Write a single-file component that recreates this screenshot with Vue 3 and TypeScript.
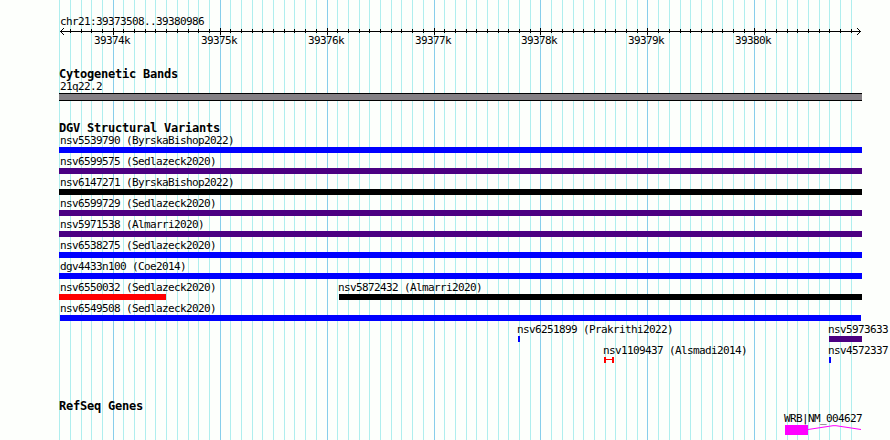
<script setup lang="ts">
interface Feature {
  label: string
  x: number
  end: number
  color: string
  labelX: number
  span?: boolean
}

const START = 39373508
const END = 39380986
const LEFT = 60
const SCALE = 800 / (END - START + 1)

const toX = (pos: number): number => Math.round(LEFT + (pos - START) * SCALE)

const lines: { x: number; major: boolean }[] = []
for (let pos = 39373500; pos <= END; pos += 100) {
  lines.push({ x: toX(pos), major: pos % 1000 === 0 })
}
const ticks = lines.slice(1)

const majors: { x: number; text: string }[] = []
for (let pos = 39374000; pos <= END; pos += 1000) {
  majors.push({ x: toX(pos) - 19, text: `${pos / 1000}k` })
}

const BLUE = '#0000ff'
const INDIGO = '#4b0082'
const BLACK = '#000000'
const RED = '#ff0000'

const full = (label: string, color: string): Feature[] => [
  { label, x: 59, end: 862, color, labelX: 60 },
]

const rows: Feature[][] = [
  full('nsv5539790 (ByrskaBishop2022)', BLUE),
  full('nsv6599575 (Sedlazeck2020)', INDIGO),
  full('nsv6147271 (ByrskaBishop2022)', BLACK),
  full('nsv6599729 (Sedlazeck2020)', INDIGO),
  full('nsv5971538 (Almarri2020)', INDIGO),
  full('nsv6538275 (Sedlazeck2020)', BLUE),
  full('dgv4433n100 (Coe2014)', BLUE),
  [
    { label: 'nsv6550032 (Sedlazeck2020)', x: 59, end: 166, color: RED, labelX: 60 },
    { label: 'nsv5872432 (Almarri2020)', x: 339, end: 862, color: BLACK, labelX: 338 },
  ],
  [{ label: 'nsv6549508 (Sedlazeck2020)', x: 60, end: 861, color: BLUE, labelX: 60 }],
  [
    { label: 'nsv6251899 (Prakrithi2022)', x: 518, end: 520, color: BLUE, labelX: 517 },
    { label: 'nsv5973633', x: 829, end: 862, color: INDIGO, labelX: 828 },
  ],
  [
    { label: 'nsv1109437 (Alsmadi2014)', x: 604, end: 614, color: RED, labelX: 603, span: true },
    { label: 'nsv4572337', x: 829, end: 831, color: BLUE, labelX: 828 },
  ],
]
</script>

<template>
  <main class="browser">
    <svg class="gridlines" width="890" height="440" shape-rendering="crispEdges">
      <rect
        v-for="line in lines"
        :key="line.x"
        :x="line.x"
        y="0"
        width="1"
        height="440"
        :class="line.major ? 'major' : 'minor'"
      />
    </svg>

    <header class="ruler">
      <div class="text region">chr21:39373508..39380986</div>
      <svg class="axis" width="890" height="7" shape-rendering="crispEdges">
        <rect x="60" y="3" width="801" height="1" />
        <rect
          v-for="tick in ticks"
          :key="tick.x"
          :x="tick.x"
          :y="tick.major ? 0 : 1"
          width="1"
          :height="tick.major ? 7 : 4"
        />
        <path d="M61 2h1v-1h1v-1h1v1h-1v1h-1v1h-1zM61 4h1v1h1v1h1v1h-1v-1h-1v-1h-1z" />
        <path d="M860 2h-1v-1h-1v-1h-1v1h1v1h1v1h1zM860 4h-1v1h-1v1h-1v1h1v-1h1v-1h1z" />
      </svg>
      <div class="lane">
        <span v-for="m in majors" :key="m.x" class="text placed" :style="{ left: m.x + 'px' }">{{ m.text }}</span>
      </div>
    </header>

    <section class="cytobands">
      <h2 class="title">Cytogenetic Bands</h2>
      <div class="text region">21q22.2</div>
      <div class="band"></div>
    </section>

    <section class="variants">
      <h2 class="title">DGV Structural Variants</h2>
      <div v-for="(row, i) in rows" :key="i" class="row">
        <template v-for="f in row" :key="f.label">
          <span class="text placed" :style="{ left: f.labelX + 'px' }">{{ f.label }}</span>
          <span
            class="bar"
            :class="{ span: f.span }"
            :style="{ left: f.x + 'px', width: f.end - f.x + 'px', color: f.color }"
          ></span>
        </template>
      </div>
    </section>

    <section class="genes">
      <h2 class="title">RefSeq Genes</h2>
      <div class="text gene-label">WRB|NM_004627</div>
      <svg class="gene" width="890" height="12">
        <rect x="785" y="0" width="23" height="10" />
        <path d="M808 4.5L833 0.7H836L861 4.5" />
      </svg>
    </section>
  </main>
</template>

<style>
body {
  margin: 0;
  background: #fdfffc;
}
</style>

<style scoped>
.browser {
  position: relative;
  width: 890px;
  height: 440px;
  overflow: hidden;
  background: #fdfffc;
  color: #000;
}

svg {
  display: block;
}

.gridlines {
  position: absolute;
  inset: 0;
}

.minor {
  fill: #afeeee;
}

.major {
  fill: #87ceeb;
}

.ruler,
.cytobands,
.variants,
.genes {
  position: relative;
}

.ruler {
  padding-top: 16px;
}

.text {
  display: block;
  height: 12px;
  font-family: 'DejaVu Sans Mono', 'Liberation Mono', monospace;
  font-size: 11px;
  line-height: 12px;
  letter-spacing: -0.623px;
  white-space: pre;
}

.region {
  padding-left: 60px;
}

.lane {
  position: relative;
  height: 12px;
}

.placed {
  position: absolute;
  top: 0;
}

.title {
  height: 14px;
  margin: 0;
  padding-left: 59px;
  font-family: 'DejaVu Sans Mono', 'Liberation Mono', monospace;
  font-size: 12px;
  font-weight: 700;
  line-height: 14px;
  letter-spacing: -0.225px;
  white-space: pre;
}

.cytobands {
  padding-top: 20px;
}

.band {
  box-sizing: border-box;
  width: 803px;
  height: 8px;
  margin-left: 59px;
  background: #848084;
  border-top: 1px solid #000;
  border-bottom: 1px solid #000;
}

.variants {
  padding-top: 20px;
}

.row {
  position: relative;
  height: 21px;
}

.bar {
  position: absolute;
  top: 12px;
  height: 6px;
  background: currentColor;
}

.bar.span {
  box-sizing: border-box;
  border-right: 2px solid currentColor;
  border-left: 2px solid currentColor;
  background: linear-gradient(currentColor, currentColor) 0 2px / 100% 1px no-repeat;
}

.genes {
  padding-top: 33px;
}

.gene-label {
  padding-left: 784px;
}

.gene rect {
  fill: #ff00ff;
}

.gene path {
  fill: none;
  stroke: #ff00ff;
  stroke-width: 1;
}
</style>
